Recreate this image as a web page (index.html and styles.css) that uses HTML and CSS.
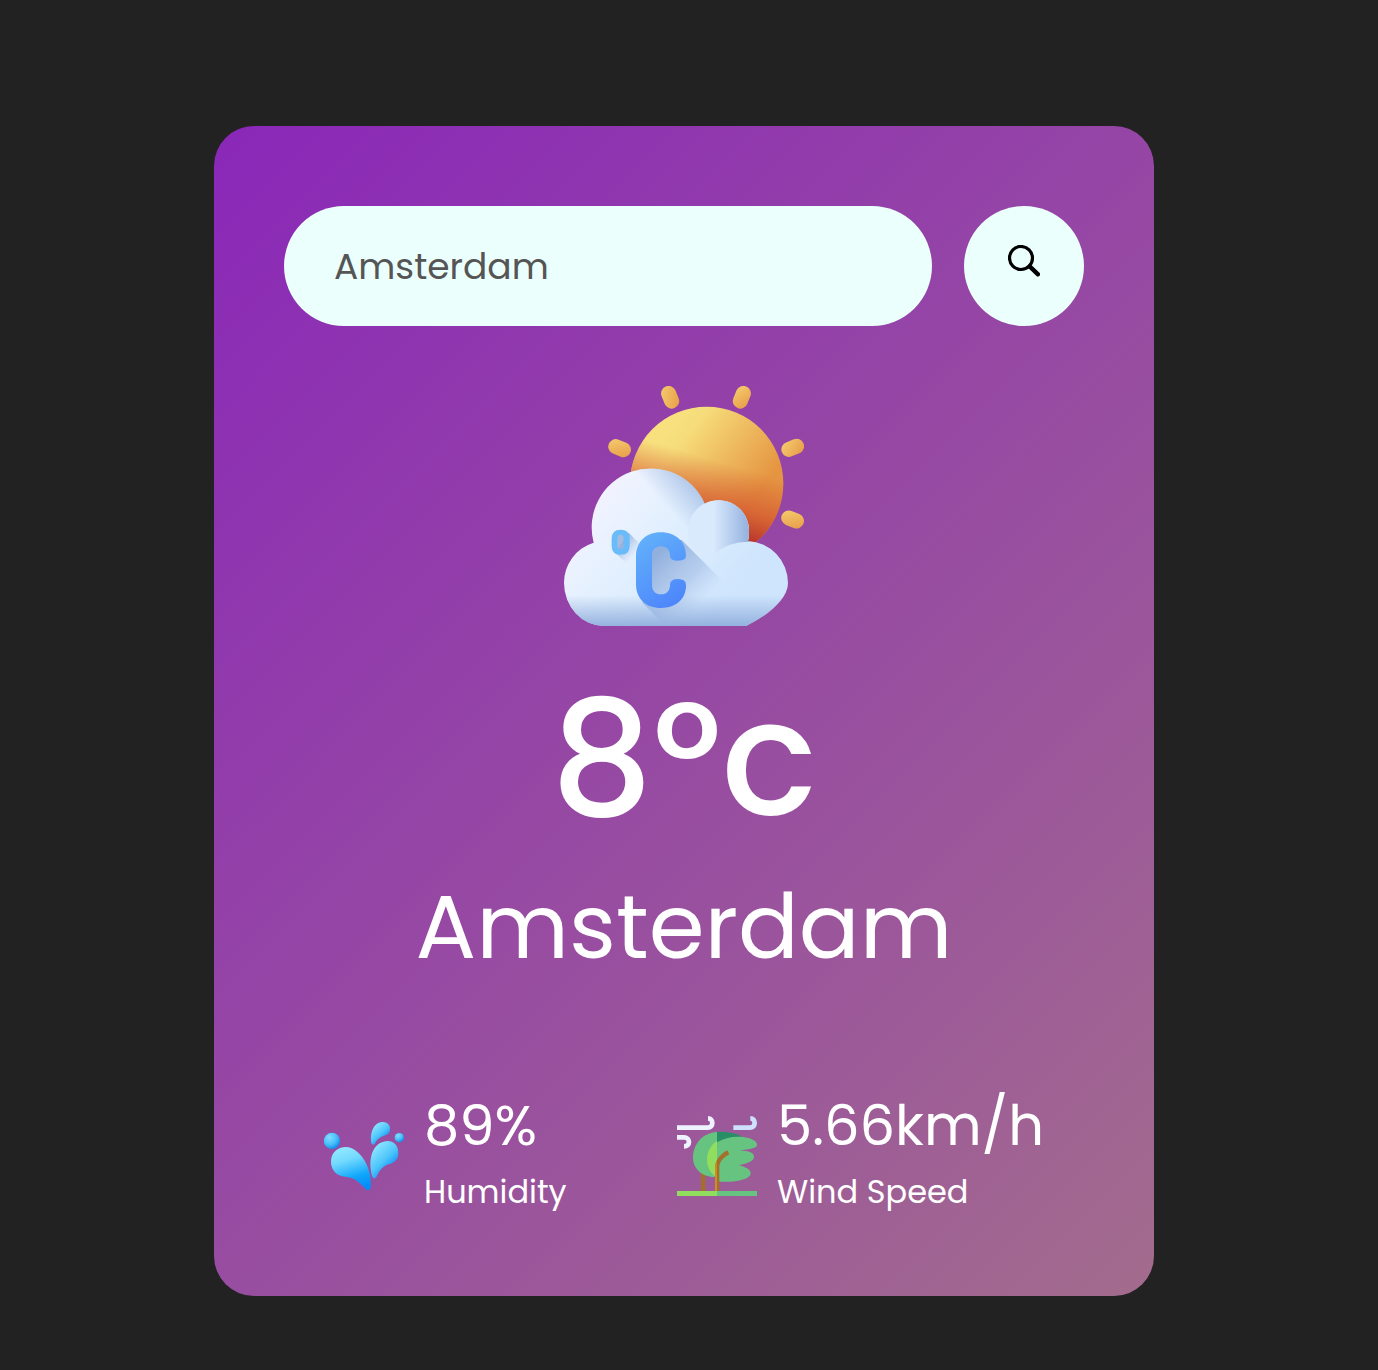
FILE: index.html
```html
<!DOCTYPE html>
<html lang="en">
<head>
<meta charset="utf-8">
<title>Weather</title>
<link rel="stylesheet" href="styles.css">
</head>
<body>
<main class="card">
  <div class="search">
    <input class="search-input" type="text" value="Amsterdam" spellcheck="false" aria-label="City">
    <button class="search-button" aria-label="Search">
      <svg class="search-icon" viewBox="54 45 96 96" fill="none" stroke="#000">
        <circle cx="93" cy="84" r="34.500" stroke-width="9.500"/>
        <path d="M119 109L144 133" stroke-width="13" stroke-linecap="round"/>
      </svg>
    </button>
  </div>
  <section class="weather">
    <svg class="weather-icon" viewBox="42 33 720 720">
      <defs>
        <linearGradient id="sun" gradientUnits="userSpaceOnUse" x1="345" y1="185" x2="600" y2="385"><stop offset="0" stop-color="#f8e07e"/><stop offset=".15" stop-color="#f6dc7a"/><stop offset="1" stop-color="#e59542"/></linearGradient>
        <linearGradient id="sunShade" gradientUnits="userSpaceOnUse" x1="462" y1="245" x2="396" y2="475"><stop offset="0" stop-color="#d2502e" stop-opacity="0"/><stop offset=".5" stop-color="#d2502e" stop-opacity=".66"/><stop offset="1" stop-color="#a81f25"/></linearGradient>
        <linearGradient id="ray" x1="0" y1="0" x2="1" y2="1"><stop offset="0" stop-color="#f5cd70"/><stop offset="1" stop-color="#e79b46"/></linearGradient>
        <linearGradient id="cloud" gradientUnits="userSpaceOnUse" x1="150" y1="390" x2="500" y2="700"><stop offset="0" stop-color="#f0f3ff"/><stop offset=".45" stop-color="#e0effe"/><stop offset="1" stop-color="#cfe5fd"/></linearGradient>
        <linearGradient id="topShade" gradientUnits="userSpaceOnUse" x1="333" y1="377" x2="440" y2="280"><stop offset="0" stop-color="#8cabdb" stop-opacity="0"/><stop offset="1" stop-color="#8cabdb" stop-opacity=".8"/></linearGradient>
        <linearGradient id="smallShade" gradientUnits="userSpaceOnUse" x1="490" y1="0" x2="597" y2="0"><stop offset="0" stop-color="#8cabdb" stop-opacity="0"/><stop offset="1" stop-color="#8cabdb" stop-opacity=".9"/></linearGradient>
        <linearGradient id="baseShade" gradientUnits="userSpaceOnUse" x1="0" y1="660" x2="0" y2="753"><stop offset="0" stop-color="#8cabdb" stop-opacity="0"/><stop offset="1" stop-color="#8cabdb" stop-opacity=".88"/></linearGradient>
        <linearGradient id="cShadow" gradientUnits="userSpaceOnUse" x1="325" y1="535" x2="465" y2="675"><stop offset="0" stop-color="#84a5d8" stop-opacity=".85"/><stop offset=".6" stop-color="#8fadDC" stop-opacity=".45"/><stop offset="1" stop-color="#9db8e0" stop-opacity="0"/></linearGradient>
        <linearGradient id="oShadow" gradientUnits="userSpaceOnUse" x1="205" y1="495" x2="254" y2="540"><stop offset="0" stop-color="#84a5d8" stop-opacity=".9"/><stop offset="1" stop-color="#9db8e0" stop-opacity="0"/></linearGradient>
        <linearGradient id="glyph" gradientUnits="userSpaceOnUse" x1="260" y1="490" x2="400" y2="690"><stop offset="0" stop-color="#62b1fb"/><stop offset="1" stop-color="#4c83fb"/></linearGradient>
        <clipPath id="cloudClip"><path d="M163 753A121 129 0 0 1 42 624A126 126 0 0 1 131 503A177 177 0 0 1 464 386A91 91 0 0 1 597 467Q597 486 594 498A126 126 0 0 1 714 624C714 672 653 722 588 753Z"/></clipPath>
      </defs>
      <g fill="url(#ray)">
        <rect x="338" y="32" width="45" height="70" rx="22.500" transform="rotate(-22 360 67)"/>
        <rect x="553" y="32" width="45" height="70" rx="22.500" transform="rotate(22 576 67)"/>
        <rect x="174" y="197" width="70" height="45" rx="22.500" transform="rotate(22 209 219)"/>
        <rect x="693" y="196" width="70" height="45" rx="22.500" transform="rotate(-22 728 218)"/>
        <rect x="693" y="411" width="70" height="45" rx="22.500" transform="rotate(22 728 433)"/>
      </g>
      <circle cx="470" cy="325" r="230" fill="url(#sun)"/>
      <circle cx="470" cy="325" r="230" fill="url(#sunShade)"/>
      <g clip-path="url(#cloudClip)">
        <path fill="url(#cloud)" d="M42 270H714V753H42Z"/>
        <path fill="url(#topShade)" d="M228 270H480V470H420Z"/>
        <path fill="#d9eafd" d="M414 467A92 92 0 0 1 598 467V500Q530 500 490 540Q414 540 414 467Z"/>
        <path fill="url(#smallShade)" d="M490 370H600V500Q530 500 490 540Z"/>
        <path fill="url(#baseShade)" d="M42 660H714V753H42Z"/>
        <path fill="#a5bce2" d="M195 474H228V530H195Z"/>
        <path fill="url(#oShadow)" d="M236 473L276 513L262 580L245 580L196 534Z"/>
        <path fill="url(#cShadow)" d="M395 495L535 635L430 753H348L278 684L270 500Z"/>
      </g>
      <path fill="#69bbf9" fill-rule="evenodd" d="M212 464Q239 464 239 491V512Q239 539 212 539Q185 539 185 512V491Q185 464 212 464ZM212 479Q202 479 202 491V511Q202 523 212 523Q221 523 221 511V491Q221 479 212 479Z"/>
      <path fill="url(#glyph)" d="M332 472C379 472 408 502 408 543Q408 557 384 557Q360 557 360 542C360 525 350 514 333 514C316 514 306 525 306 541V630C306 648 317 658 333 658C350 658 360 647 360 629Q360 612 384 612Q408 612 408 631C408 671 380 699 333 699C287 699 258 671 258 627V546C258 501 287 472 332 472Z"/>
    </svg>
    <h1 class="temp">8°c</h1>
    <h2 class="city">Amsterdam</h2>
    <div class="details">
      <div class="detail">
        <svg class="detail-icon" viewBox="27 18 240 240">
          <defs>
            <linearGradient id="drop" x1=".3" y1="0" x2=".6" y2="1"><stop offset="0" stop-color="#91e8ff"/><stop offset=".3" stop-color="#74dafd"/><stop offset=".72" stop-color="#0fa6fb"/><stop offset="1" stop-color="#058cf8"/></linearGradient>
            <radialGradient id="ball" cx=".35" cy=".28" r=".8"><stop offset="0" stop-color="#82defe"/><stop offset=".55" stop-color="#48bffa"/><stop offset="1" stop-color="#0780e6"/></radialGradient>
            <linearGradient id="dropRight" x1=".2" y1=".1" x2=".75" y2=".85"><stop offset="0" stop-color="#8ee6ff"/><stop offset=".55" stop-color="#4dc5fa"/><stop offset="1" stop-color="#0385fa"/></linearGradient>
          </defs>
          <circle cx="51" cy="93" r="24.500" fill="url(#ball)"/>
          <circle cx="253" cy="83" r="14" fill="url(#ball)"/>
          <path fill="url(#drop)" d="M93 111C136 112 174 178 167 233Q162 245 153 238C127 211 118 203 91 200C65 198 48 180 48 155C48 128 68 111 93 111Z"/>
          <path fill="url(#dropRight)" d="M217 93C240 93 251 111 250 131C249 149 239 157 221 163C204 169 193 180 184 202Q177 208 172 200C158 151 170 96 217 93Z"/>
          <path fill="url(#dropRight)" d="M204 36C219 36 227 48 225 60C223 72 215 75 203 79C191 84 184 91 179 102Q173 108 169 99C164 66 177 36 204 36Z"/>
        </svg>
        <div class="detail-text">
          <p class="value">89%</p>
          <p class="label">Humidity</p>
        </div>
      </div>
      <div class="detail">
        <svg class="detail-icon" viewBox="21 33 240 240">
          <path fill="#a2702a" d="M93 200H106V260H93Z"/>
          <path fill="#66c480" d="M141 81C98 84 69 116 69 158C69 191 96 215 132 216L160 205L185 110L141 81Z"/>
          <path fill="#278e66" d="M141 81C169 79 193 84 214 94L205 115H141Z"/>
          <path fill="#66c480" d="M141 112C163 98 191 93 220 96C244 99 262 108 261 120C260 131 240 131 209 137C233 137 252 140 252 155C252 170 230 174 208 181C225 186 243 193 242 206C240 223 191 235 141 229Z"/>
          <path fill="#91dd5d" d="M141 107C104 133 100 184 135 214L141 210Z"/>
          <path fill="#a2702a" d="M141 259H148V187C148 172 157 159 178 148L172 136C149 148 135 167 135 189V259Z"/>
          <path fill="#d18b20" d="M135 259V189Q135 178 141 168V259Z"/>
          <path fill="#91dd5d" d="M21 258H141V273H21Z"/>
          <path fill="#66c480" d="M141 258H261V273H141Z"/>
          <g fill="none" stroke-width="14">
            <path stroke="#eef3ff" d="M21 68H113C122 68 127 62 127 54C127 46 122 40 114 40"/>
            <path stroke="#eef3ff" d="M21 97H42C51 97 57 103 57 111C57 119 51 124 42 124"/>
            <path stroke="#cee1fc" d="M190 68H240C249 68 254 62 254 54C254 46 249 40 241 40"/>
          </g>
        </svg>
        <div class="detail-text">
          <p class="value">5.66km/h</p>
          <p class="label">Wind Speed</p>
        </div>
      </div>
    </div>
  </section>
</main>
</body>
</html>
```

FILE: styles.css
```css
* {
  box-sizing: border-box;
  margin: 0;
  padding: 0;
}

body {
  min-height: 100vh;
  padding: 126px 0 0 214px;
  background: #222;
  font-family: Poppins, Inter, sans-serif;
}

.card {
  width: 940px;
  height: 1170px;
  padding: 80px 70px;
  border-radius: 40px;
  background: linear-gradient(135deg, #8a27b9, #a36c8d);
  color: #fff;
}

.search {
  display: flex;
  justify-content: space-between;
}

.search-input {
  width: 648px;
  height: 120px;
  padding: 0 50px;
  border: 0;
  outline: 0;
  border-radius: 60px;
  background: #ebfffc;
  color: #555;
  font: inherit;
  font-size: 36px;
}

.search-button {
  display: flex;
  align-items: center;
  justify-content: center;
  width: 120px;
  height: 120px;
  padding-bottom: 10px;
  border: 0;
  border-radius: 50%;
  background: #ebfffc;
}

.search-icon {
  width: 32px;
  height: 32px;
}

.weather {
  display: flex;
  flex-direction: column;
  align-items: center;
  margin-top: 60px;
}

.weather-icon {
  width: 240px;
  height: 240px;
}

.temp {
  margin-top: 13px;
  font-size: 160px;
  font-weight: 500;
  line-height: 240px;
}

.city {
  margin-top: -20px;
  font-size: 90px;
  font-weight: 400;
  line-height: 135px;
}

.details {
  display: grid;
  grid-template-columns: 353px 1fr;
  width: 100%;
  margin-top: 90px;
  padding-left: 40px;
}

.detail {
  display: flex;
  gap: 20px;
}

.detail-icon {
  width: 80px;
  height: 80px;
  margin-top: 32px;
}

.detail-text {
  white-space: nowrap;
}

.value {
  font-size: 56px;
  line-height: 84px;
}

.label {
  font-size: 32px;
  line-height: 48px;
}
```
